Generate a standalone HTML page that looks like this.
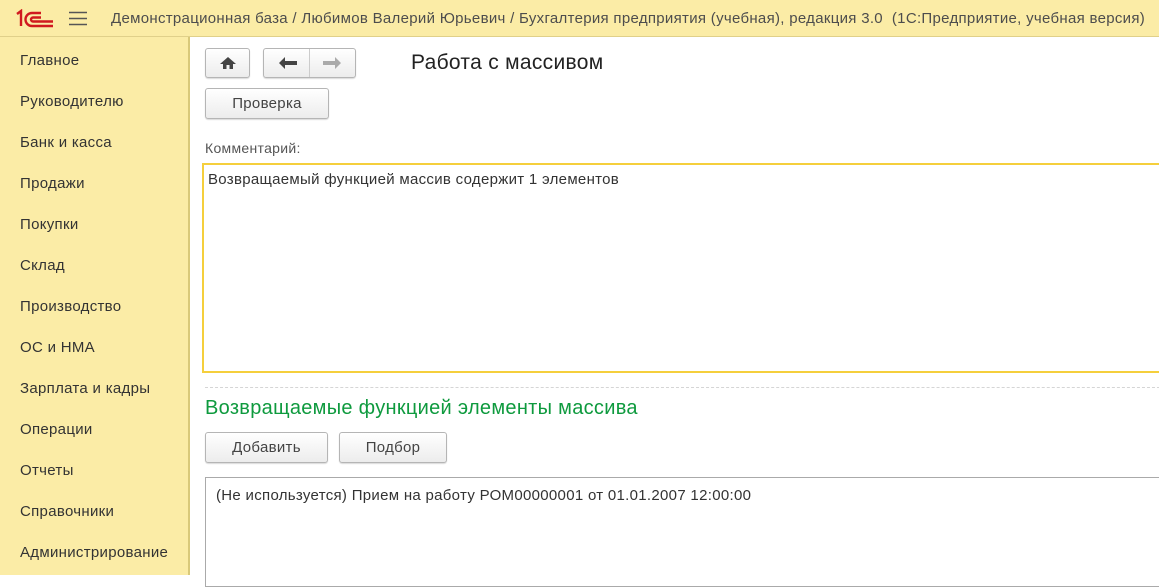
<!DOCTYPE html>
<html><head><meta charset="utf-8"><style>
*{box-sizing:border-box;margin:0;padding:0}
body{width:1159px;height:575px;overflow:hidden;font-family:"Liberation Sans",sans-serif;background:#fff;position:relative;color:#333;letter-spacing:0.3px}
.hdr{position:absolute;left:0;top:0;width:1159px;height:37px;background:#fbeca6;border-bottom:1px solid #e0d08a}
.hdr .t{position:absolute;left:111px;top:10px;font-size:15px;color:#4d4d4d;white-space:nowrap}
.side{position:absolute;left:0;top:37px;width:190px;height:538px;background:#fbeca6;border-right:2px solid #d9c97a}
.side div{position:absolute;left:20px;font-size:15px;color:#333}
.btn{position:absolute;background:linear-gradient(#fff,#ececec);border:1px solid #b5b5b5;border-radius:3px;box-shadow:0 1px 1px rgba(0,0,0,.15);font-size:15px;color:#444;text-align:center}
.abs{position:absolute}
</style></head><body>
<div class="hdr">
<svg class="abs" style="left:15px;top:9px" width="40" height="19" viewBox="0 0 40 19"><g fill="none" stroke="#d0191f" stroke-width="2.4"><path d="M2 5 L6 2 V17"/><path d="M26 4 H17 a6.5 6.5 0 0 0 0 13 H38"/><path d="M26 8.5 H18 a2 2 0 0 0 0 4 H38"/></g></svg>
<svg class="abs" style="left:69px;top:11px" width="18" height="15"><g stroke="#555" stroke-width="1.5"><path d="M0 1.5H18M0 7.5H18M0 13.5H18"/></g></svg>
<div class="t">Демонстрационная база / Любимов Валерий Юрьевич / Бухгалтерия предприятия (учебная), редакция 3.0&nbsp; (1С:Предприятие, учебная версия)</div>
</div>
<div class="side">
<div style="top:15px">Главное</div><div style="top:56px">Руководителю</div><div style="top:97px">Банк и касса</div><div style="top:138px">Продажи</div><div style="top:179px">Покупки</div><div style="top:220px">Склад</div><div style="top:261px">Производство</div><div style="top:302px">ОС и НМА</div><div style="top:343px">Зарплата и кадры</div><div style="top:384px">Операции</div><div style="top:425px">Отчеты</div><div style="top:466px">Справочники</div><div style="top:507px">Администрирование</div>
</div>
<div class="btn" style="left:205px;top:48px;width:45px;height:30px"><svg width="18" height="14" style="margin-top:7px" viewBox="0 0 18 14"><path d="M9 1 L1 8 H4 V13 H7.5 V9 H10.5 V13 H14 V8 H17Z" fill="#444"/></svg></div>
<div class="btn" style="left:263px;top:48px;width:93px;height:30px"></div>
<div class="abs" style="left:309px;top:49px;width:1px;height:28px;background:#ccc"></div>
<svg class="abs" style="left:278px;top:56px" width="20" height="14"><path d="M1 7 L7 1 V5 H19 V9 H7 V13Z" fill="#444"/></svg>
<svg class="abs" style="left:322px;top:56px" width="20" height="14"><path d="M19 7 L13 1 V5 H1 V9 H13 V13Z" fill="#aaa"/></svg>
<div class="abs" style="left:411px;top:51px;font-size:21px;color:#222">Работа с массивом</div>
<div class="btn" style="left:205px;top:88px;width:124px;height:31px;line-height:29px">Проверка</div>
<div class="abs" style="left:205px;top:140px;font-size:14px;color:#555">Комментарий:</div>
<div class="abs" style="left:202px;top:163px;width:970px;height:210px;border:2px solid #f5cf3c"></div>
<div class="abs" style="left:208px;top:171px;font-size:15px;color:#333">Возвращаемый функцией массив содержит 1 элементов</div>
<div class="abs" style="left:205px;top:387px;width:960px;border-top:1px dashed #d5d5d5"></div>
<div class="abs" style="left:205px;top:397px;font-size:20px;color:#0e9a3e">Возвращаемые функцией элементы массива</div>
<div class="btn" style="left:205px;top:432px;width:123px;height:31px;line-height:29px">Добавить</div>
<div class="btn" style="left:339px;top:432px;width:108px;height:31px;line-height:29px">Подбор</div>
<div class="abs" style="left:205px;top:477px;width:970px;height:110px;border:1px solid #aaa"></div>
<div class="abs" style="left:216px;top:487px;font-size:15px;color:#333">(Не используется) Прием на работу РОМ00000001 от 01.01.2007 12:00:00</div>
</body></html>
